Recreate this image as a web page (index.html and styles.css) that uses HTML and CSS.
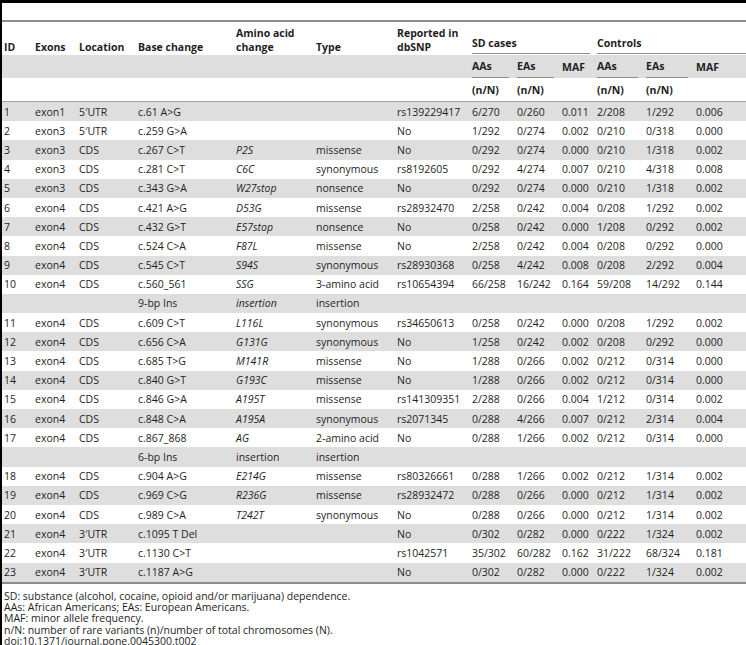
FILE: index.html
```html
<!DOCTYPE html>
<html lang="en">

<head>
    <meta charset="UTF-8" />
    <title>Table 2 - Rare variants</title>
    <link rel="stylesheet" href="styles.css">
</head>

<body>
    <div class="page">
        <table class="variants">
            <colgroup>
                <col style="width:31px">
                <col style="width:44px">
                <col style="width:59px">
                <col style="width:98px">
                <col style="width:80px">
                <col style="width:81px">
                <col style="width:75px">
                <col style="width:45px">
                <col style="width:45px">
                <col style="width:35px">
                <col style="width:49px">
                <col style="width:50px">
                <col style="width:52px">
            </colgroup>
            <thead>
                <tr class="head1">
                    <th>ID</th>
                    <th>Exons</th>
                    <th>Location</th>
                    <th>Base change</th>
                    <th>Amino acid<br>change</th>
                    <th>Type</th>
                    <th>Reported in<br>dbSNP</th>
                    <th colspan="3" class="group"><span class="line">SD cases</span></th>
                    <th colspan="3" class="group last"><span class="line">Controls</span></th>
                </tr>
                <tr class="head2">
                    <th></th><th></th><th></th><th></th><th></th><th></th><th></th>
                    <th class="sub"><span class="line">AAs</span></th>
                    <th class="sub"><span class="line">EAs</span></th>
                    <th class="maf">MAF</th>
                    <th class="sub"><span class="line">AAs</span></th>
                    <th class="sub"><span class="line">EAs</span></th>
                    <th class="maf">MAF</th>
                </tr>
                <tr class="head3">
                    <th></th><th></th><th></th><th></th><th></th><th></th><th></th>
                    <th>(n/N)</th>
                    <th>(n/N)</th>
                    <th></th>
                    <th>(n/N)</th>
                    <th>(n/N)</th>
                    <th></th>
                </tr>
            </thead>
            <tbody>
                <tr><td>1</td><td>exon1</td><td>5′UTR</td><td>c.61 A&gt;G</td><td></td><td></td><td>rs139229417</td><td>6/270</td><td>0/260</td><td>0.011</td><td>2/208</td><td>1/292</td><td>0.006</td></tr>
                <tr><td>2</td><td>exon3</td><td>5′UTR</td><td>c.259 G&gt;A</td><td></td><td></td><td>No</td><td>1/292</td><td>0/274</td><td>0.002</td><td>0/210</td><td>0/318</td><td>0.000</td></tr>
                <tr><td>3</td><td>exon3</td><td>CDS</td><td>c.267 C&gt;T</td><td><i>P2S</i></td><td>missense</td><td>No</td><td>0/292</td><td>0/274</td><td>0.000</td><td>0/210</td><td>1/318</td><td>0.002</td></tr>
                <tr><td>4</td><td>exon3</td><td>CDS</td><td>c.281 C&gt;T</td><td><i>C6C</i></td><td>synonymous</td><td>rs8192605</td><td>0/292</td><td>4/274</td><td>0.007</td><td>0/210</td><td>4/318</td><td>0.008</td></tr>
                <tr><td>5</td><td>exon3</td><td>CDS</td><td>c.343 G&gt;A</td><td><i>W27stop</i></td><td>nonsence</td><td>No</td><td>0/292</td><td>0/274</td><td>0.000</td><td>0/210</td><td>1/318</td><td>0.002</td></tr>
                <tr><td>6</td><td>exon4</td><td>CDS</td><td>c.421 A&gt;G</td><td><i>D53G</i></td><td>missense</td><td>rs28932470</td><td>2/258</td><td>0/242</td><td>0.004</td><td>0/208</td><td>1/292</td><td>0.002</td></tr>
                <tr><td>7</td><td>exon4</td><td>CDS</td><td>c.432 G&gt;T</td><td><i>E57stop</i></td><td>nonsence</td><td>No</td><td>0/258</td><td>0/242</td><td>0.000</td><td>1/208</td><td>0/292</td><td>0.002</td></tr>
                <tr><td>8</td><td>exon4</td><td>CDS</td><td>c.524 C&gt;A</td><td><i>F87L</i></td><td>missense</td><td>No</td><td>2/258</td><td>0/242</td><td>0.004</td><td>0/208</td><td>0/292</td><td>0.000</td></tr>
                <tr><td>9</td><td>exon4</td><td>CDS</td><td>c.545 C&gt;T</td><td><i>S94S</i></td><td>synonymous</td><td>rs28930368</td><td>0/258</td><td>4/242</td><td>0.008</td><td>0/208</td><td>2/292</td><td>0.004</td></tr>
                <tr><td>10</td><td>exon4</td><td>CDS</td><td>c.560_561</td><td><i>SSG</i></td><td>3-amino acid</td><td>rs10654394</td><td>66/258</td><td>16/242</td><td>0.164</td><td>59/208</td><td>14/292</td><td>0.144</td></tr>
                <tr><td></td><td></td><td></td><td>9-bp Ins</td><td><i>insertion</i></td><td>insertion</td><td></td><td></td><td></td><td></td><td></td><td></td><td></td></tr>
                <tr><td>11</td><td>exon4</td><td>CDS</td><td>c.609 C&gt;T</td><td><i>L116L</i></td><td>synonymous</td><td>rs34650613</td><td>0/258</td><td>0/242</td><td>0.000</td><td>0/208</td><td>1/292</td><td>0.002</td></tr>
                <tr><td>12</td><td>exon4</td><td>CDS</td><td>c.656 C&gt;A</td><td><i>G131G</i></td><td>synonymous</td><td>No</td><td>1/258</td><td>0/242</td><td>0.002</td><td>0/208</td><td>0/292</td><td>0.000</td></tr>
                <tr><td>13</td><td>exon4</td><td>CDS</td><td>c.685 T&gt;G</td><td><i>M141R</i></td><td>missense</td><td>No</td><td>1/288</td><td>0/266</td><td>0.002</td><td>0/212</td><td>0/314</td><td>0.000</td></tr>
                <tr><td>14</td><td>exon4</td><td>CDS</td><td>c.840 G&gt;T</td><td><i>G193C</i></td><td>missense</td><td>No</td><td>1/288</td><td>0/266</td><td>0.002</td><td>0/212</td><td>0/314</td><td>0.000</td></tr>
                <tr><td>15</td><td>exon4</td><td>CDS</td><td>c.846 G&gt;A</td><td><i>A195T</i></td><td>missense</td><td>rs141309351</td><td>2/288</td><td>0/266</td><td>0.004</td><td>1/212</td><td>0/314</td><td>0.002</td></tr>
                <tr><td>16</td><td>exon4</td><td>CDS</td><td>c.848 C&gt;A</td><td><i>A195A</i></td><td>synonymous</td><td>rs2071345</td><td>0/288</td><td>4/266</td><td>0.007</td><td>0/212</td><td>2/314</td><td>0.004</td></tr>
                <tr><td>17</td><td>exon4</td><td>CDS</td><td>c.867_868</td><td><i>AG</i></td><td>2-amino acid</td><td>No</td><td>0/288</td><td>1/266</td><td>0.002</td><td>0/212</td><td>0/314</td><td>0.000</td></tr>
                <tr><td></td><td></td><td></td><td>6-bp Ins</td><td>insertion</td><td>insertion</td><td></td><td></td><td></td><td></td><td></td><td></td><td></td></tr>
                <tr><td>18</td><td>exon4</td><td>CDS</td><td>c.904 A&gt;G</td><td><i>E214G</i></td><td>missense</td><td>rs80326661</td><td>0/288</td><td>1/266</td><td>0.002</td><td>0/212</td><td>1/314</td><td>0.002</td></tr>
                <tr><td>19</td><td>exon4</td><td>CDS</td><td>c.969 C&gt;G</td><td><i>R236G</i></td><td>missense</td><td>rs28932472</td><td>0/288</td><td>0/266</td><td>0.000</td><td>0/212</td><td>1/314</td><td>0.002</td></tr>
                <tr><td>20</td><td>exon4</td><td>CDS</td><td>c.989 C&gt;A</td><td><i>T242T</i></td><td>synonymous</td><td>No</td><td>0/288</td><td>0/266</td><td>0.000</td><td>0/212</td><td>1/314</td><td>0.002</td></tr>
                <tr><td>21</td><td>exon4</td><td>3′UTR</td><td>c.1095 T Del</td><td></td><td></td><td>No</td><td>0/302</td><td>0/282</td><td>0.000</td><td>0/222</td><td>1/324</td><td>0.002</td></tr>
                <tr><td>22</td><td>exon4</td><td>3′UTR</td><td>c.1130 C&gt;T</td><td></td><td></td><td>rs1042571</td><td>35/302</td><td>60/282</td><td>0.162</td><td>31/222</td><td>68/324</td><td>0.181</td></tr>
                <tr><td>23</td><td>exon4</td><td>3′UTR</td><td>c.1187 A&gt;G</td><td></td><td></td><td>No</td><td>0/302</td><td>0/282</td><td>0.000</td><td>0/222</td><td>1/324</td><td>0.002</td></tr>
            </tbody>
        </table>

        <div class="notes">
            <p>SD: substance (alcohol, cocaine, opioid and/or marijuana) dependence.</p>
            <p>AAs: African Americans; EAs: European Americans.</p>
            <p>MAF: minor allele frequency.</p>
            <p>n/N: number of rare variants (n)/number of total chromosomes (N).</p>
            <p>doi:10.1371/journal.pone.0045300.t002</p>
        </div>
    </div>
</body>

</html>
```

FILE: styles.css
```css
html,
body {
    margin: 0;
    padding: 0;
    background: #fff;
}

body {
    font-family: "Open Sans", "DejaVu Sans", sans-serif;
    font-size: 10.5px;
    color: #1e1e1e;
}

.page {
    height: 100vh;
    overflow: hidden;
    box-sizing: border-box;
    border-top: 3px solid #000;
    border-left: 2px solid #000;
    padding-top: 17px;
}

.variants {
    width: 744px;
    table-layout: fixed;
    border-collapse: collapse;
    border-top: 2px solid #8c8c8c;
    border-bottom: 2px solid #8c8c8c;
}

th,
td {
    padding: 0 0 0 2px;
    text-align: left;
    white-space: nowrap;
    overflow: hidden;
}

th {
    font-weight: bold;
    line-height: 14px;
}

.head1 th {
    height: 34px;
    vertical-align: bottom;
    padding-bottom: 1px;
    box-sizing: border-box;
}

.head1 th.group {
    padding-bottom: 1px;
    padding-right: 5px;
}

.head1 th.group.last {
    padding-right: 0;
}

.line {
    display: block;
    border-bottom: 1px solid #8c8c8c;
    padding-bottom: 3px;
}

.head2 th {
    height: 23px;
    background: #dedede;
    vertical-align: middle;
}

.head2 th.sub {
    vertical-align: bottom;
    padding-right: 6px;
    padding-bottom: 0;
}

.head2 th.sub .line {
    padding-bottom: 4px;
}

.head3 th {
    height: 23px;
    vertical-align: middle;
    border-bottom: 1px solid #a0a0a0;
}

tbody td {
    height: 19.2px;
    line-height: 14px;
    vertical-align: middle;
}

tbody tr:nth-child(odd) td {
    background: #dedede;
}

.notes {
    padding: 7px 0 0 2px;
    font-size: 10.5px;
    line-height: 11.3px;
}

.notes p {
    margin: 0;
}
```
